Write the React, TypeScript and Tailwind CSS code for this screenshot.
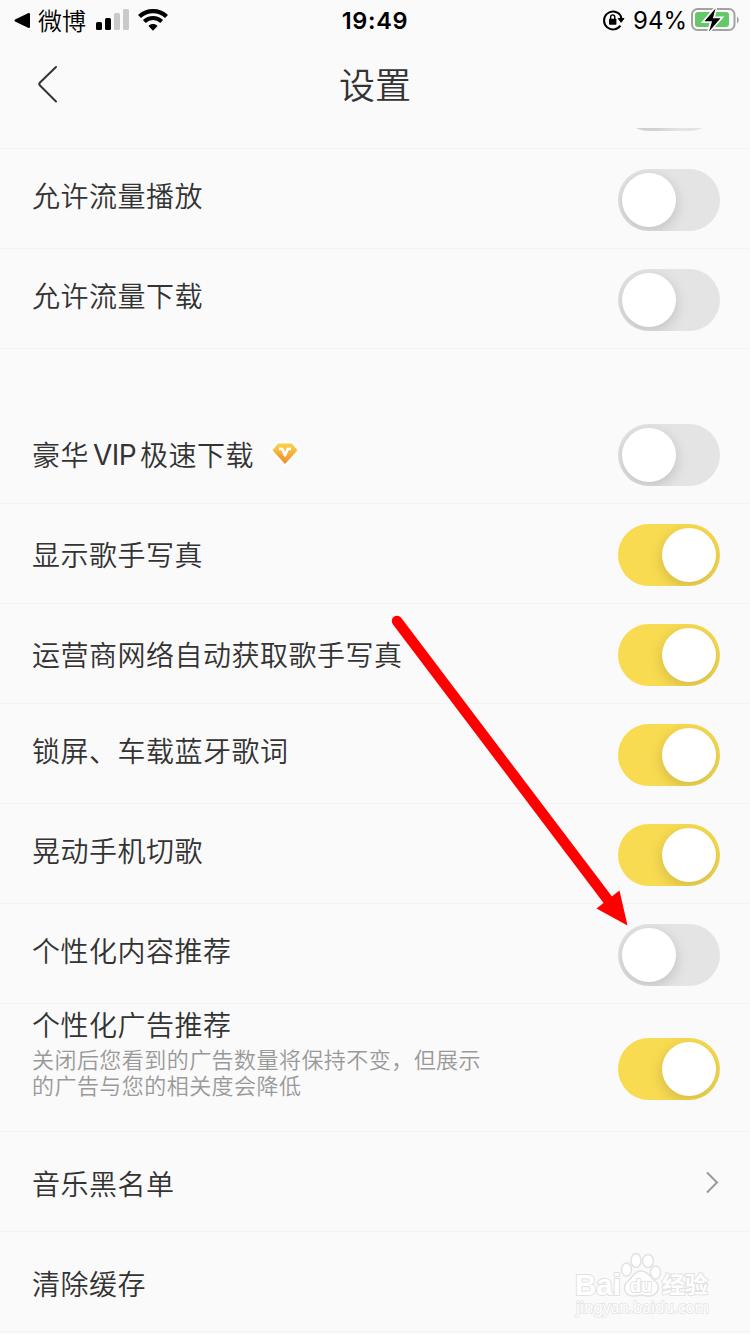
import clsx from 'clsx';
import type { ReactNode } from 'react';

type SettingItem = {
  label: ReactNode;
  on?: boolean;
  // labels sit a few pixels lower in some rows
  offset: string;
};

const trafficItems: SettingItem[] = [
  { label: '允许流量播放', on: false, offset: 'pt-[25px]' },
  { label: '允许流量下载', on: false, offset: 'pt-[25px]' },
];

const playItems: SettingItem[] = [
  {
    label: (
      <>
        豪华<span className="mx-[4px] pt-0.5 font-['Inter'] text-[28px] font-normal tracking-[-0.6px]">VIP</span>极速下载
        <VipBadge />
      </>
    ),
    on: false,
    offset: 'pt-[29px]',
  },
  { label: '显示歌手写真', on: true, offset: 'pt-[29px]' },
  { label: '运营商网络自动获取歌手写真', on: true, offset: 'pt-[29px]' },
  { label: '锁屏、车载蓝牙歌词', on: true, offset: 'pt-[25px]' },
  { label: '晃动手机切歌', on: true, offset: 'pt-[25px]' },
  { label: '个性化内容推荐', on: false, offset: 'pt-[25px]' },
];

function VipBadge() {
  return (
    <svg className="ml-[13px] h-[32px] w-[36px] shrink-0" viewBox="0 0 36 32">
      <defs>
        <linearGradient id="vip" x1="0" y1="0" x2="0" y2="1">
          <stop offset="0" stopColor="#f9d04a" />
          <stop offset="1" stopColor="#f0932f" />
        </linearGradient>
      </defs>
      <path d="M11.500 6h13l5.500 6L18 25 6 12z" fill="#fff" stroke="#fff" strokeWidth="6" strokeLinejoin="round" />
      <path d="M11.500 6.200h13l5 6L18 25 6.500 12.200z" fill="url(#vip)" stroke="url(#vip)" strokeWidth="1.500" strokeLinejoin="round" />
      <path d="M6.500 12.200L18 19v6z" fill="#ee8c2c" opacity=".3" />
      <path d="M12 10.800h3.200L18 17.300l2.800-6.500H24" fill="none" stroke="#fff" strokeWidth="2.800" strokeLinejoin="round" />
    </svg>
  );
}

function Toggle({ on = false, className }: { on?: boolean; className?: string }) {
  return (
    <button
      type="button"
      role="switch"
      aria-checked={on}
      className={clsx(
        'flex h-[62px] w-[102px] shrink-0 items-center overflow-hidden rounded-full px-1',
        on ? 'justify-end bg-[#f8db51]' : 'justify-start bg-[#e4e4e4]',
        className,
      )}
    >
      <span className="size-[54px] rounded-full bg-white shadow-[0_4px_14px_rgba(0,0,0,0.16)]" />
    </button>
  );
}

function SettingRow({ label, on, offset }: SettingItem) {
  return (
    <div className="flex h-[100px] items-start justify-between border-b border-[#f3f3f3] pr-[30px] pl-8">
      <div className={offset}>
        <div className="flex h-[42px] items-center text-[28px] tracking-[0.5px] whitespace-nowrap">{label}</div>
      </div>
      <Toggle on={on} className="mt-5" />
    </div>
  );
}

function StatusBar() {
  return (
    <div className="grid h-10 grid-cols-3 items-center text-black">
      <div className="flex h-10 items-center pl-[14px]">
        <svg className="h-4 w-4" viewBox="0 0 16 16">
          <path d="M1.500 8.500L15 2v13z" stroke="#000" strokeWidth="2" strokeLinejoin="round" />
        </svg>
        <span className="ml-2 text-[24px] leading-10">微博</span>
        <svg className="ml-[10px] h-[22px] w-[34px]" viewBox="0 0 34 22">
          <rect x="0" y="13" width="6" height="8" rx="1.500" />
          <rect x="9" y="9" width="6" height="12" rx="1.500" />
          <rect x="18" y="4" width="6" height="17" rx="1.500" fill="#c9c9c9" />
          <rect x="27" y="0" width="6" height="21" rx="1.500" fill="#c9c9c9" />
        </svg>
        <svg className="ml-[8px] h-[22px] w-[30px]" viewBox="0 0 30 22" fill="none" stroke="#000">
          <path d="M1.500 7.500C9 .3 21 .3 28.500 7.500" strokeWidth="4.200" />
          <path d="M6.300 12.500c5-4.600 12.400-4.600 17.400 0" strokeWidth="4" />
          <path d="M10.500 17c2.600-2.600 6.400-2.600 9 0L15 21.700z" fill="#000" stroke="none" />
        </svg>
      </div>
      <div className="pt-0.5 text-center font-['Inter'] text-[23.500px] font-semibold tracking-[0.7px]">19:49</div>
      <div className="flex items-center justify-end pr-[9px]">
        <svg className="h-[22px] w-[24px]" viewBox="0 0 24 22">
          <path d="M18.200 6A9 9 0 1 0 18.400 16.600" fill="none" stroke="#000" strokeWidth="2" />
          <path d="M16.200 9.500h5.800l-2.900 3.800z" stroke="#000" strokeLinejoin="round" />
          <path d="M19.300 10c0-1.500-.3-2.700-1.200-4.200" fill="none" stroke="#000" strokeWidth="2" />
          <rect x="7" y="9.800" width="7.400" height="6" rx=".8" />
          <path d="M8.600 10.300V8.300a2.100 2.400 0 0 1 4.200 0v2" fill="none" stroke="#000" strokeWidth="1.400" />
        </svg>
        <span className="ml-[7px] pt-0.5 font-['Inter'] text-[24px] font-normal">94%</span>
        <svg className="ml-1 h-[26px] w-[50px]" viewBox="0 0 50 26">
          <rect x="1" y="2" width="42.500" height="21" rx="5.500" fill="none" stroke="#a2a2a2" strokeWidth="2" />
          <rect x="4" y="5" width="34" height="15" rx="3" fill="#64c868" />
          <path d="M46 9.500c2.300 1.500 2.300 5.500 0 7z" fill="#a2a2a2" />
          <path d="M24.500 1L13 14.500h7.500L17.500 25 30 11h-7.500z" stroke="#fafafa" strokeWidth="3" />
          <path d="M24.500 1.500L13.500 14.300h7.600L18 24.500 29.500 11.300h-7.600z" />
        </svg>
      </div>
    </div>
  );
}

function NavBar() {
  return (
    <header className="grid h-[88px] grid-cols-[100px_1fr_100px] items-center">
      <svg className="ml-9 h-10 w-6" viewBox="0 0 24 40" fill="none" stroke="#333" strokeWidth="2">
        <path d="M20 3L4 18.500q-1.500 1.500 0 3l16 16" strokeLinecap="round" />
      </svg>
      <h1 className="-mt-0.5 text-center text-[36px] leading-[84px] font-[350]">设置</h1>
    </header>
  );
}

function Watermark() {
  return (
    <svg className="absolute top-[1248px] left-[570px] h-[72px] w-[146px]" viewBox="0 0 146 72" fill="#fff" stroke="#e2e2e2">
      <g strokeWidth="1.500">
        <ellipse cx="56.500" cy="21.500" rx="5" ry="6.500" />
        <ellipse cx="66" cy="12.500" rx="5" ry="7" />
        <ellipse cx="78" cy="13" rx="5.500" ry="6.500" />
        <ellipse cx="85.500" cy="24.500" rx="5" ry="6.500" />
        <path d="M71 23c-7 0-8 6-13 10-6 5-4 15 5 15 4 0 5-1 8-1s4 1 8 1c9 0 12-10 6-15-5-4-7-10-14-10z" />
      </g>
      <g strokeWidth="2" paintOrder="stroke" fontWeight="700">
        <text x="5" y="47" fontSize="30" textLength="46" lengthAdjust="spacingAndGlyphs" fontFamily="Liberation Sans, sans-serif">Bai</text>
        <text x="92" y="45" fontSize="23" textLength="46" fontFamily="Noto Sans CJK SC, sans-serif">经验</text>
        <text x="60" y="44" fontSize="19" textLength="22" lengthAdjust="spacingAndGlyphs" fontFamily="Liberation Sans, sans-serif">du</text>
      </g>
      <text x="6" y="65" fontSize="15.500" fontWeight="400" strokeWidth="1.500" paintOrder="stroke" textLength="133" lengthAdjust="spacingAndGlyphs" fontFamily="Noto Sans, sans-serif">jingyan.baidu.com</text>
    </svg>
  );
}

export default function App() {
  return (
    <div className="relative h-[1334px] w-[750px] overflow-hidden bg-[#fafafa] font-['Noto_Sans_CJK_SC',sans-serif] font-[350] text-[#333]">
      <StatusBar />
      <NavBar />

      <main>
        {/* tail of the row scrolled under the nav bar */}
        <div className="flex h-[21px] flex-col items-end justify-end overflow-hidden border-b border-[#f3f3f3] pr-[30px]">
          <Toggle className="mb-[17px]" />
        </div>

        <section>
          {trafficItems.map((item, i) => (
            <SettingRow key={i} {...item} />
          ))}
        </section>

        <section className="mt-[55px]">
          {playItems.map((item, i) => (
            <SettingRow key={i} {...item} />
          ))}

          <div className="flex h-[128px] items-start justify-between border-b border-[#f3f3f3] pr-[30px] pl-8">
            <div>
              <div className="h-[41px] text-[28px] leading-[40px] tracking-[0.5px]">个性化广告推荐</div>
              <p className="w-[460px] text-[22px] leading-[26px] tracking-[0.45px] text-[#999]">
                关闭后您看到的广告数量将保持不变，但展示的广告与您的相关度会降低
              </p>
            </div>
            <Toggle on className="mt-[34px]" />
          </div>

          <div className="flex h-[100px] items-center justify-between border-b border-[#f3f3f3] pr-[31px] pl-8">
            <span className="pt-0.5 text-[28px] tracking-[0.5px]">音乐黑名单</span>
            <svg className="h-6 w-4" viewBox="0 0 16 24" fill="none" stroke="#999" strokeWidth="2">
              <path d="M4 2.500L14 12.500L4 22.500" />
            </svg>
          </div>
          <div className="flex h-[100px] items-center border-b border-[#f3f3f3] pl-8">
            <span className="pt-0.5 text-[28px] tracking-[0.5px]">清除缓存</span>
          </div>
        </section>
      </main>

      {/* arrow pointing at the content recommendation switch */}
      <svg className="pointer-events-none absolute top-[600px] left-[380px] h-[340px] w-[260px]" viewBox="380 600 260 340">
        <path d="M397 621L608 900" stroke="#f00" strokeWidth="10.500" strokeLinecap="round" />
        <path d="M627.500 925.500L596.500 908.500L619.500 890.500z" fill="#f00" />
      </svg>
      <Watermark />
    </div>
  );
}
